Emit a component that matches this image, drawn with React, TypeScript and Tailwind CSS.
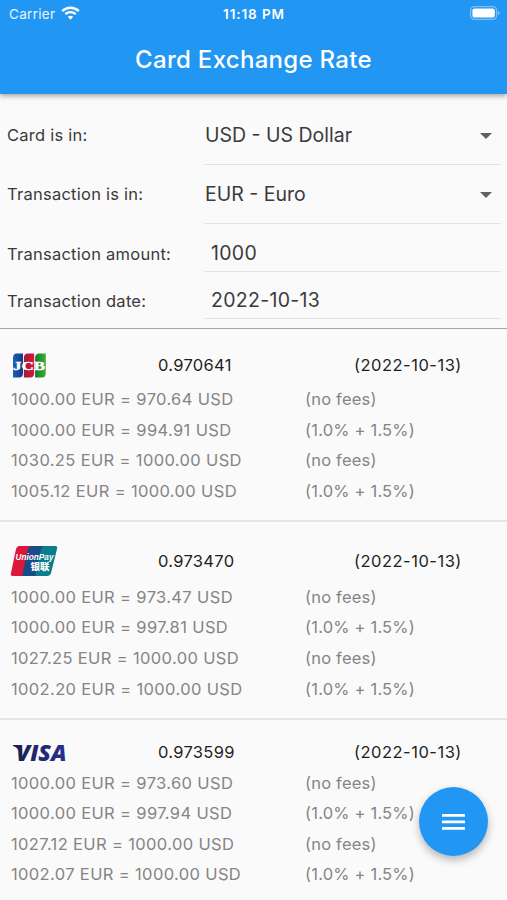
import type { ReactNode } from 'react';

type Conversion = {
  text: string;
  fees: string;
};

type Network = {
  name: string;
  logo: ReactNode;
  rate: string;
  date: string;
  headerClass: string;
  conversions: Conversion[];
};

const NO_FEES = '(no fees)';
const WITH_FEES = '(1.0% + 1.5%)';

const JcbLogo = () => (
  <svg width="36" height="26" viewBox="0 0 36 26" role="img" aria-label="JCB">
    <defs>
      <linearGradient id="jcb-blue">
        <stop offset="0" stopColor="#1c5fb8" />
        <stop offset="1" stopColor="#123a86" />
      </linearGradient>
      <linearGradient id="jcb-red">
        <stop offset="0" stopColor="#a01a3a" />
        <stop offset="1" stopColor="#dc1638" />
      </linearGradient>
      <linearGradient id="jcb-green">
        <stop offset="0" stopColor="#0c7c35" />
        <stop offset="1" stopColor="#45ad35" />
      </linearGradient>
    </defs>
    <path d="M5.5 .5H12V20Q12 24.5 8 24.5H2V5Q2 .5 5.5 .5Z" fill="url(#jcb-blue)" />
    <path d="M17 .5H23.2V20Q23.2 24.5 19 24.5H12.9V5Q12.9 .5 17 .5Z" fill="url(#jcb-red)" />
    <path d="M28.5 .5H34.8V20Q34.8 24.5 31 24.5H24.1V5Q24.1 .5 28.5 .5Z" fill="url(#jcb-green)" />
    <text
      x="2"
      y="16.5"
      textLength="32"
      lengthAdjust="spacingAndGlyphs"
      strokeWidth=".4"
      className="fill-white stroke-white font-['Liberation_Serif',serif] text-[12px] font-bold"
    >
      JCB
    </text>
  </svg>
);

const UnionPayLogo = () => (
  <svg width="48" height="32" viewBox="0 0 48 32" className="-ml-px" role="img" aria-label="UnionPay">
    <path d="M9 1H23L16 31H3Q0 31 1 28L6 4Q7 1 9 1Z" fill="#dc1838" />
    <path d="M21 1H35L28 31H14Q12 31 12.5 28L18 4Q19 1 21 1Z" fill="#194b89" />
    <path d="M34 1H45Q48 1 47 4L41 28Q40 31 37 31H25L31 4Q32 1 34 1Z" fill="#087d8c" />
    <text
      x="5.5"
      y="15"
      textLength="38"
      lengthAdjust="spacingAndGlyphs"
      className="fill-white font-['Liberation_Sans',sans-serif] text-[9.5px] font-bold italic leading-none"
    >
      UnionPay
    </text>
    <text
      x="20.5"
      y="25"
      textLength="19"
      lengthAdjust="spacingAndGlyphs"
      className="fill-white font-['Noto_Sans_CJK_SC',sans-serif] text-[9px] font-black leading-none"
    >
      银联
    </text>
  </svg>
);

const VisaLogo = () => (
  <svg width="56" height="20" viewBox="0 0 56 20" className="overflow-visible" role="img" aria-label="VISA">
    <defs>
      <linearGradient id="visa-blue">
        <stop offset="0" stopColor="#1c2150" />
        <stop offset="1" stopColor="#272f91" />
      </linearGradient>
    </defs>
    <path d="M2 2H7L9 5L8 8Q6 4 2 3Z" fill="#1c2150" />
    <text
      x="5"
      y="17.7"
      textLength="50.5"
      lengthAdjust="spacingAndGlyphs"
      fill="url(#visa-blue)"
      className="font-['Open_Sans',sans-serif] text-[22px] font-extrabold italic"
    >
      VISA
    </text>
  </svg>
);

const networks: Network[] = [
  {
    name: 'JCB',
    logo: <JcbLogo />,
    rate: '0.970641',
    date: '(2022-10-13)',
    headerClass: 'h-[37px]',
    conversions: [
      { text: '1000.00 EUR = 970.64 USD', fees: NO_FEES },
      { text: '1000.00 EUR = 994.91 USD', fees: WITH_FEES },
      { text: '1030.25 EUR = 1000.00 USD', fees: NO_FEES },
      { text: '1005.12 EUR = 1000.00 USD', fees: WITH_FEES },
    ],
  },
  {
    name: 'UnionPay',
    logo: <UnionPayLogo />,
    rate: '0.973470',
    date: '(2022-10-13)',
    headerClass: 'h-[42px]',
    conversions: [
      { text: '1000.00 EUR = 973.47 USD', fees: NO_FEES },
      { text: '1000.00 EUR = 997.81 USD', fees: WITH_FEES },
      { text: '1027.25 EUR = 1000.00 USD', fees: NO_FEES },
      { text: '1002.20 EUR = 1000.00 USD', fees: WITH_FEES },
    ],
  },
  {
    name: 'Visa',
    logo: <VisaLogo />,
    rate: '0.973599',
    date: '(2022-10-13)',
    headerClass: 'h-[30px]',
    conversions: [
      { text: '1000.00 EUR = 973.60 USD', fees: NO_FEES },
      { text: '1000.00 EUR = 997.94 USD', fees: WITH_FEES },
      { text: '1027.12 EUR = 1000.00 USD', fees: NO_FEES },
      { text: '1002.07 EUR = 1000.00 USD', fees: WITH_FEES },
    ],
  },
];

const StatusBar = () => (
  <div className="grid h-7 grid-cols-3 items-center pl-2 pr-[7px] text-[13.5px] leading-none">
    <div className="flex items-center gap-1.5 pl-px pt-px text-white/90">
      <span className="tracking-[0.3px]">Carrier</span>
      <svg width="19" height="14" viewBox="0 0 19 14" fill="none" className="-mt-1" aria-hidden="true">
        <path d="M1.2 5.1C6 .6 13 .6 17.8 5.1" stroke="white" strokeWidth="2.5" />
        <path d="M4.3 8.2C7.3 5.4 11.7 5.4 14.7 8.2" stroke="white" strokeWidth="2.4" />
        <path d="M6.8 10.8C8.4 9.4 10.6 9.4 12.2 10.8L9.5 13.7Z" fill="white" />
      </svg>
    </div>
    <span className="pt-px text-center font-semibold tracking-[0.9px] text-white">11:18 PM</span>
    <svg width="30" height="14" viewBox="0 0 30 14" className="-mt-0.5 justify-self-end" aria-hidden="true">
      <rect x=".6" y=".6" width="26" height="12.8" rx="3.8" fill="none" stroke="white" strokeOpacity=".4" strokeWidth="1.2" />
      <rect x="2.4" y="2.4" width="22.4" height="9.2" rx="2.2" fill="white" />
      <path d="M28 5V9Q29.5 8.5 29.5 7T28 5Z" fill="white" fillOpacity=".5" />
    </svg>
  </div>
);

const Field = ({ label, rowClass, children }: { label: string; rowClass: string; children: ReactNode }) => (
  <div className={`flex ${rowClass}`}>
    <div className="flex w-[197px] shrink-0 items-center text-[16.5px] tracking-[0.25px]">{label}</div>
    <div className="flex flex-1 items-center border-b border-[#e4e4e4] text-[19.5px] tracking-[0.1px]">
      {children}
    </div>
  </div>
);

const SelectValue = ({ value }: { value: string }) => (
  <div className="flex flex-1 items-center justify-between pl-px pr-[9px] pt-0.5">
    <span className="tracking-normal">{value}</span>
    <svg width="12" height="6" viewBox="0 0 12 6" aria-hidden="true">
      <path d="M0 0H12L6 6Z" fill="#616161" />
    </svg>
  </div>
);

const NetworkSection = ({ network }: { network: Network }) => (
  <section className="border-b-2 border-[#e5e5e5] px-[11px] pb-[13.5px] pt-[18px]">
    <div className={`flex items-center ${network.headerClass}`}>
      <div className="min-w-0 flex-1">{network.logo}</div>
      <div className="flex w-[338px] text-[16.5px] text-[#1f1f1f]">
        <span className="w-[196px] tracking-[0.3px]">{network.rate}</span>
        <span className="tracking-[0.5px]">{network.date}</span>
      </div>
    </div>
    {network.conversions.map((row) => (
      <div key={row.text} className="flex h-[30.6px] items-center text-[16.5px] text-[#858585]">
        <span className="w-[294px] tracking-[0.36px]">{row.text}</span>
        <span className="tracking-[0.2px]">{row.fees}</span>
      </div>
    ))}
  </section>
);

export default function App() {
  return (
    <div className="relative h-[900px] w-full overflow-hidden bg-[#fafafa] font-[Inter,sans-serif] text-[#3a3a3a]">
      <header className="relative h-[94px] bg-[#2196f3] text-white shadow-[0_2px_5px_rgba(0,0,0,0.35)]">
        <StatusBar />
        <h1 className="flex h-16 items-center justify-center text-[24px] font-medium tracking-[0.3px]">
          Card Exchange Rate
        </h1>
      </header>

      {/* Conversion form */}
      <div className="border-b border-[#a6a6a6] pb-[9px] pl-[7px] pr-1.5 pt-3">
        <Field label="Card is in:" rowClass="h-[59px]">
          <SelectValue value="USD - US Dollar" />
        </Field>
        <Field label="Transaction is in:" rowClass="h-[59px]">
          <SelectValue value="EUR - Euro" />
        </Field>
        <Field label="Transaction amount:" rowClass="h-12 *:pt-3">
          <span className="pl-[7px] tracking-[0.3px]">1000</span>
        </Field>
        <Field label="Transaction date:" rowClass="h-[47px] *:pt-[11px]">
          <span className="pl-[7px] tracking-[0.3px]">2022-10-13</span>
        </Field>
      </div>

      {/* Rates by card network */}
      {networks.map((network) => (
        <NetworkSection key={network.name} network={network} />
      ))}

      <button
        aria-label="Menu"
        className="absolute bottom-11 right-[19px] flex size-[69px] items-center justify-center rounded-full bg-[#2196f3] shadow-[0_4px_8px_rgba(0,0,0,0.28)]"
      >
        <svg width="23" height="16" viewBox="0 0 23 16" fill="white" aria-hidden="true">
          <rect width="23" height="2.8" rx=".4" />
          <rect y="6.5" width="23" height="2.8" rx=".4" />
          <rect y="13" width="23" height="2.8" rx=".4" />
        </svg>
      </button>
    </div>
  );
}
